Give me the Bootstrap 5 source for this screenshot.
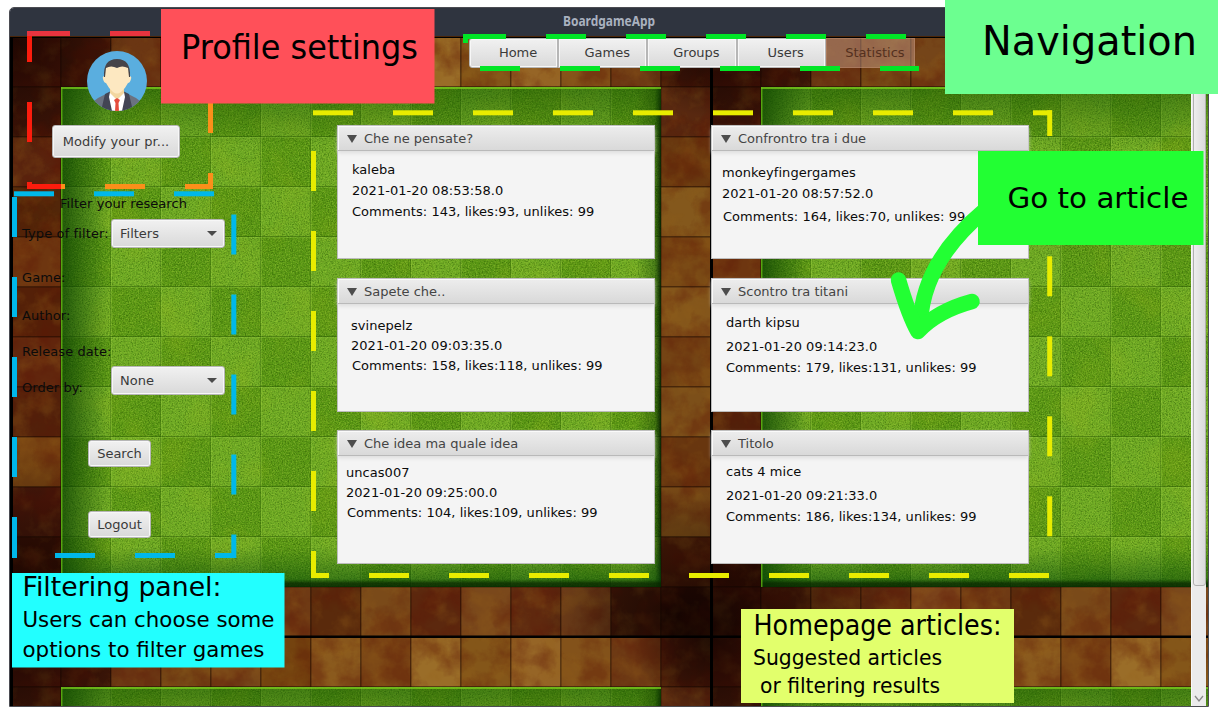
<!DOCTYPE html>
<html lang="it">
<head>
<meta charset="utf-8">
<title>BoardgameApp</title>
<link href="https://cdn.jsdelivr.net/npm/bootstrap@5.3.0/dist/css/bootstrap.min.css" rel="stylesheet">
<script src="https://cdn.jsdelivr.net/npm/bootstrap@5.3.0/dist/js/bootstrap.bundle.min.js"></script>
<style>
html,body{height:717px;overflow:hidden}
body{background:#fff;font-family:"DejaVu Sans",sans-serif;font-size:13px;line-height:16px;color:#0b0b0b}
.stage{width:1218px;height:717px;padding:7px 9px 10px 9px}
.app-window{width:1200px;height:700px;border:1px solid #4b4c52;border-radius:5px 5px 0 0;overflow:hidden}
.title-bar{height:29px;background:#2f343f;border-bottom:1px solid #4a2508;flex:none}
.title-bar svg{display:block}
.view{background:#000;min-height:0}
.board{left:0;top:0}
.fx{background:linear-gradient(#f1f1f1,#d9d9d9);border:1px solid #b6b6b6;box-shadow:inset 0 0 0 1px #f7f7f7;color:#3a3a3a;border-radius:3px;font-size:13px;line-height:16px;padding:0;--bs-btn-hover-color:#333}
.side-panel{width:301px;padding-left:12px;flex:none}
.avatar{margin:14px 0 0 65px;display:block}
.modify{width:128px;height:33px;margin:14px 0 0 30px;letter-spacing:.07px}
.filter-title{margin:38px 0 0 38px;letter-spacing:.05px}
.filter-line{height:29px}
.filter-line .cap{width:89px;white-space:nowrap;letter-spacing:.06px}
.line-type{margin-top:7px}
.line-type .cap{letter-spacing:.12px}
.line-game{margin-top:15px}
.line-author{margin-top:9px}
.line-release{margin-top:7px}
.line-order{height:29px}
.line-order .cap{margin-bottom:-1px}
.combo{width:114px;height:29px;padding:0 7px 0 8px}
.small-btn{width:63px;height:27px;margin-left:66px}
.search{margin-top:45px}
.logout{margin-top:44px}
.pages{margin-left:158px;margin-top:1px;width:446px;height:30px}
.pages .fx{width:89.2px;border-radius:0;padding:0 0 1px 9px}
.pages .fx:first-child{border-radius:3px 0 0 3px}
.pages .ghost{background:rgba(215,180,165,.4);border-color:rgba(200,150,120,.4);box-shadow:none;color:#54301e}
.articles{display:grid;grid-template-columns:318px 318px;column-gap:56px;row-gap:18px;margin:57px 0 0 26px}
.articles .pane:nth-child(-n+2){margin-bottom:1px}
.pane{height:134px;background:#f4f4f4;border:1px solid #bcbcbc;border-radius:0}
.pane-head{height:25px;background:linear-gradient(#ededed,#d9d9d9);border-bottom:1px solid #b9b9b9;box-shadow:inset 1px 1px 0 #fafafa,0 2px 4px #dcdcdc;color:#444;padding:2px 0 0 9px;gap:7px}
.pane p{margin:0;line-height:16px;white-space:nowrap;letter-spacing:.04px}
.p1{padding:11px 0 0 14px;gap:5px}
.p2{padding:14px 0 0 10px;gap:5px}
.p3{padding:14px 0 0 13px;gap:4px}
.p4{padding:11px 0 0 14px;gap:5px}
.p5{padding:9px 0 0 8px;gap:4px}
.p6{padding:8px 0 0 14px;gap:5px}
.p2 p+p+p{padding-top:2px}
.p4 p:first-child,.p6 p:first-child{margin-bottom:3px}
.p2 p+p+p,.p3 p+p+p,.p5 p+p+p{padding-left:1px}
.scroller{width:15px;margin-right:2px;background:#ebebeb;border-left:1px solid #f8f8f8;flex:none}
.thumb{height:549px;width:13px;margin-left:1px;border:1px solid #b0b0b0;border-radius:0 0 3px 3px;background:linear-gradient(90deg,#ededed,#dadada)}
.overlay{left:0;top:0;pointer-events:none}
</style>
</head>
<body>
<div class="stage position-relative">
 <main class="app-window d-flex flex-column">
  <header class="title-bar">
   <svg width="1198" height="28"><text x="553" y="18" textLength="92" lengthAdjust="spacingAndGlyphs" font-family="Noto Sans, sans-serif" font-weight="700" font-size="13.5" fill="#a9b1bf">BoardgameApp</text></svg>
  </header>
  <div class="view position-relative d-flex flex-grow-1">
   <svg class="board position-absolute" width="1198" height="670" viewBox="10 37 1198 670">
    <defs>
     <filter id="grain" x="0" y="0" width="100%" height="100%" color-interpolation-filters="sRGB"><feTurbulence type="fractalNoise" baseFrequency=".7" numOctaves="3" seed="4"/><feColorMatrix values="0 0 0 0 .13  0 0 0 0 .3  0 0 0 0 0  3 0 0 0 -1.3"/></filter>
     <filter id="glint" x="0" y="0" width="100%" height="100%" color-interpolation-filters="sRGB"><feTurbulence type="fractalNoise" baseFrequency=".7" numOctaves="3" seed="9"/><feColorMatrix values="0 0 0 0 .65  0 0 0 0 .82  0 0 0 0 .25  0 3 0 0 -1.3"/></filter>
     <filter id="patch" x="0" y="0" width="100%" height="100%" color-interpolation-filters="sRGB"><feTurbulence type="fractalNoise" baseFrequency=".02" numOctaves="3" seed="6"/><feColorMatrix values="0 0 0 0 .7  0 0 0 0 .75  0 0 0 0 .1  0 3 0 0 -1.4"/></filter>
     <filter id="stain" x="0" y="0" width="100%" height="100%" color-interpolation-filters="sRGB"><feTurbulence type="fractalNoise" baseFrequency=".035" numOctaves="5" seed="12"/><feColorMatrix values="0 0 0 0 .36  0 0 0 0 .08  0 0 0 0 .02  3 0 0 0 -1.2"/></filter>
     <filter id="rust" x="0" y="0" width="100%" height="100%" color-interpolation-filters="sRGB"><feTurbulence type="fractalNoise" baseFrequency=".045" numOctaves="5" seed="31"/><feColorMatrix values="0 0 0 0 .58  0 0 0 0 .38  0 0 0 0 .1  0 3 0 0 -1.3"/></filter>
     <linearGradient id="inL"><stop offset="0" stop-color="#063d00" stop-opacity=".75"/><stop offset="1" stop-color="#063d00" stop-opacity="0"/></linearGradient>
     <linearGradient id="inR"><stop offset="0" stop-color="#042d00" stop-opacity="0"/><stop offset=".75" stop-color="#042d00" stop-opacity=".35"/><stop offset="1" stop-color="#021800" stop-opacity=".9"/></linearGradient>
     <linearGradient id="inT" x2="0" y2="1"><stop offset="0" stop-color="#124d00" stop-opacity=".5"/><stop offset="1" stop-color="#124d00" stop-opacity="0"/></linearGradient>
     <linearGradient id="inB" x2="0" y2="1"><stop offset="0" stop-color="#064a08" stop-opacity="0"/><stop offset=".8" stop-color="#064a08" stop-opacity=".5"/><stop offset=".9" stop-color="#052800" stop-opacity=".85"/><stop offset="1" stop-color="#052800" stop-opacity=".9"/></linearGradient>
     <radialGradient id="corner"><stop offset="0" stop-color="#080100" stop-opacity=".7"/><stop offset="1" stop-color="#080100" stop-opacity="0"/></radialGradient>
     <g id="tile"></g>
    </defs>
    <use href="#tile" x="11" y="37"/><use href="#tile" x="711" y="37"/><use href="#tile" x="11" y="637"/><use href="#tile" x="711" y="637"/>
   </svg>

   <aside class="side-panel position-relative d-flex flex-column align-items-start">
    <svg class="avatar" width="60" height="60" viewBox="0 0 60 60">
     <clipPath id="disc"><circle cx="30" cy="30" r="30"/></clipPath>
     <g clip-path="url(#disc)">
      <path fill="#5aaedf" d="M0 0h60v60H0z"/>
      <path fill="#6b7280" d="M4 60V53Q10 46 22 42H38Q50 46 56 53V60z"/>
      <path fill="#434554" d="M18 43 24 40 30 50 36 40 42 43 46 60H14z"/>
      <path fill="#fff" d="M23 41 30 46 37 41 38 46 35 60H25L22 46z"/>
      <path fill="#f2d6a0" d="M23 37H37V42L30 49 23 42z"/>
      <path fill="#e64c3c" d="M27 49 30 47 33 49 31.500 52 32 60H28L28.500 52z"/>
      <path fill="#fde8c1" d="M18 17Q18 12 30 12T42 17V25Q45 25 44 28 43 32 41 32 38 38 34 41 30 44 26 41 22 38 19 32 17 32 16 28 15 25 18 25z"/>
      <path fill="#464449" d="M17 26Q16 8 30 8T43 26H42L41 17Q35 14 30 17 24 14 19 17L18 26z"/>
     </g>
    </svg>
    <button class="btn fx modify">Modify your pr...</button>
    <div class="filter-title">Filter your research</div>
    <div class="filter-line line-type d-flex align-items-center"><span class="cap">Type of filter:</span>
     <button class="btn fx combo d-flex align-items-center justify-content-between"><span>Filters</span><svg width="10" height="5"><path d="M0 0h10L5 5z" fill="#4a4a4a"/></svg></button></div>
    <div class="filter-line line-game d-flex align-items-center"><span class="cap">Game:</span></div>
    <div class="filter-line line-author d-flex align-items-center"><span class="cap">Author:</span></div>
    <div class="filter-line line-release d-flex align-items-center"><span class="cap">Release date:</span></div>
    <div class="filter-line line-order d-flex align-items-end"><span class="cap">Order by:</span>
     <button class="btn fx combo d-flex align-items-center justify-content-between"><span>None</span><svg width="10" height="5"><path d="M0 0h10L5 5z" fill="#4a4a4a"/></svg></button></div>
    <button class="btn fx small-btn search">Search</button>
    <button class="btn fx small-btn logout">Logout</button>
   </aside>

   <section class="position-relative flex-grow-1">
    <nav class="pages d-flex">
     <button class="btn fx">Home</button><button class="btn fx">Games</button><button class="btn fx">Groups</button><button class="btn fx">Users</button><button class="btn fx ghost">Statistics</button>
    </nav>
    <div class="articles">
     <article class="pane"><div class="pane-head d-flex align-items-center"><svg width="10" height="8"><path d="M0 0h10L5 8z" fill="#4d4d4d"/></svg>Che ne pensate?</div>
      <div class="p1 d-flex flex-column"><p>kaleba</p><p>2021-01-20 08:53:58.0</p><p>Comments: 143, likes:93, unlikes: 99</p></div></article>
     <article class="pane"><div class="pane-head d-flex align-items-center"><svg width="10" height="8"><path d="M0 0h10L5 8z" fill="#4d4d4d"/></svg>Confrontro tra i due</div>
      <div class="p2 d-flex flex-column"><p>monkeyfingergames</p><p>2021-01-20 08:57:52.0</p><p>Comments: 164, likes:70, unlikes: 99</p></div></article>
     <article class="pane"><div class="pane-head d-flex align-items-center"><svg width="10" height="8"><path d="M0 0h10L5 8z" fill="#4d4d4d"/></svg>Sapete che..</div>
      <div class="p3 d-flex flex-column"><p>svinepelz</p><p>2021-01-20 09:03:35.0</p><p>Comments: 158, likes:118, unlikes: 99</p></div></article>
     <article class="pane"><div class="pane-head d-flex align-items-center"><svg width="10" height="8"><path d="M0 0h10L5 8z" fill="#4d4d4d"/></svg>Scontro tra titani</div>
      <div class="p4 d-flex flex-column"><p>darth kipsu</p><p>2021-01-20 09:14:23.0</p><p>Comments: 179, likes:131, unlikes: 99</p></div></article>
     <article class="pane"><div class="pane-head d-flex align-items-center"><svg width="10" height="8"><path d="M0 0h10L5 8z" fill="#4d4d4d"/></svg>Che idea ma quale idea</div>
      <div class="p5 d-flex flex-column"><p>uncas007</p><p>2021-01-20 09:25:00.0</p><p>Comments: 104, likes:109, unlikes: 99</p></div></article>
     <article class="pane"><div class="pane-head d-flex align-items-center"><svg width="10" height="8"><path d="M0 0h10L5 8z" fill="#4d4d4d"/></svg>Titolo</div>
      <div class="p6 d-flex flex-column"><p>cats 4 mice</p><p>2021-01-20 09:21:33.0</p><p>Comments: 186, likes:134, unlikes: 99</p></div></article>
    </div>
   </section>

   <div class="scroller position-relative d-flex flex-column justify-content-between">
    <div class="thumb"></div>
    <svg width="14" height="14"><path d="M3 4 7 9 11 4" fill="none" stroke="#888" stroke-width="1.300"/></svg>
   </div>
  </div>
 </main>

 <svg class="overlay position-absolute" width="1218" height="717" font-family="DejaVu Sans, sans-serif">
  <g id="dashes"></g>
  <g fill="none" stroke="#22ff33" stroke-width="15.500" stroke-linecap="round" stroke-linejoin="round">
   <path d="M985 210Q923 262 920.500 322"/><path d="M898.500 280Q909 316 918 331.500 937 311 972 301.500"/>
  </g>
  <rect x="161" y="9" width="273.500" height="94.500" fill="#ff5059"/>
  <rect x="945" y="0" width="273" height="94" fill="#6cff90"/>
  <rect x="978" y="151" width="225.500" height="94" fill="#22ff33"/>
  <rect x="12" y="573" width="272.500" height="94.500" fill="#22ffff"/>
  <rect x="741" y="609" width="273" height="94" fill="#e2ff6c"/>
  <g fill="#000" id="notes"></g>
 </svg>
</div>
<script>
const rect = (x, y, w, h, f, extra = '') => `<rect x="${x}" y="${y}" width="${w}" height="${h}" fill="${f}" ${extra}/>`;

// one 700x600 board: ring of earth tiles around a 12x10 lawn
const top_ = '#4a1508 #3e1608 #6b3613 #774a17 #754519 #74430f #8a5a1e #7b4716 #9a6d28 #845619 #966526 #83521a #6e3a14 #421608'.split(' ');
const bottom = '#3a1006 #4a1a08 #64300f #5f2b0f #7a421a #6f3a14 #5a2a0c #7a4a19 #5c280e #7a481b #602c10 #74401a #401808 #2e0c04'.split(' ');
const left = '#3f1508 #5a240e #522609 #6e3610 #542008 #62280e #52200a #774312 #48180a #381004'.split(' ');
const right = '#582810 #6a3a10 #84581c #7a4a15 #84561b #744414 #7c4f19 #68360f #7c4c17 #4c1c08'.split(' ');
let t = rect(0, 0, 700, 600, '#000');
const earth = (x, y, c) => { t += rect(x, y, 50, 50, c); };
top_.forEach((c, i) => earth(i * 50, 0, c));
bottom.forEach((c, i) => earth(i * 50, 550, c));
left.forEach((c, i) => earth(0, 50 + i * 50, c));
right.forEach((c, i) => earth(650, 50 + i * 50, c));
t += rect(0, 0, 700, 600, '#000', 'filter="url(#rust)" opacity=".3"') + rect(0, 0, 700, 600, '#000', 'filter="url(#stain)" opacity=".38"');
for (let i = 1; i < 14; i++) t += rect(i * 50 - 1, 0, 1.5, 600, '#1a0800', 'opacity=".5"');
for (let j = 1; j < 12; j++) t += rect(0, j * 50 - 1, 700, 1.5, '#1a0800', 'opacity=".5"');
let shade = '';
[[0, 0, 120], [700, 0, 80], [0, 600, 190], [680, 590, 150]].forEach(([x, y, r]) => { shade += `<circle cx="${x}" cy="${y}" r="${r}" fill="url(#corner)"/>`; });
t += `<svg x="0" y="0" width="700" height="600">${shade}</svg>`;
t += rect(0, 0, 2, 600, '#000') + rect(699, 0, 1.5, 600, '#000') + rect(0, 0, 700, 1, '#000') + rect(0, 598.5, 700, 2, '#000');
for (let j = 0; j < 10; j++) for (let i = 0; i < 12; i++) {
  const x = 50 + i * 50, y = 50 + j * 50, light = (i + j) % 2 === 0;
  t += rect(x, y, 50, 50, light ? '#6fab24' : '#599714');
}
t += rect(50, 50, 600, 500, '#000', 'filter="url(#grain)" opacity=".4"') + rect(50, 50, 600, 500, '#000', 'filter="url(#glint)" opacity=".4"') + rect(50, 50, 600, 500, '#000', 'filter="url(#patch)" opacity=".16"');
for (let i = 1; i < 13; i++) t += rect(i * 50, 50, 1, 500, '#a4d84c', 'opacity=".3"') + rect(i * 50 + 49, 50, 1, 500, '#1d4a00', 'opacity=".25"');
for (let j = 1; j < 11; j++) t += rect(50, j * 50, 600, 1, '#a4d84c', 'opacity=".25"') + rect(50, j * 50 + 49, 600, 1, '#1d4a00', 'opacity=".4"');
t += rect(50, 50, 48, 500, 'url(#inL)') + rect(625, 50, 25, 500, 'url(#inR)') + rect(50, 50, 600, 60, 'url(#inT)') + rect(50, 510, 600, 40, 'url(#inB)') + rect(50, 50, 600, 2, '#7fd11d', 'opacity=".7"') + rect(50, 50, 1.5, 500, '#6cc414', 'opacity=".7"');
document.getElementById('tile').innerHTML = t;

// dashed frames, as runs [from, to] along each side
let d = '';
const hor = (y, c, runs, h = 5) => runs.forEach(([a, b]) => d += rect(a, y, b - a, h, c));
const ver = (x, c, runs, w = 5) => runs.forEach(([a, b]) => d += rect(x, a, w, b - a, c));
const every = (a, n, end) => Array.from({length: n}, (_, i) => [a + i * 80, Math.min(a + i * 80 + 40, end || 9999)]);
hor(31, '#e8343f', [[27, 70], [110, 150]]);
ver(27, '#fb1c0d', [[36, 62], [102, 142], [182, 189]]);
hor(184, '#fb1c0d', [[27, 61]]); hor(184, '#fb8f1a', [[61, 65], [105, 145], [185, 213]]);
ver(208, '#fb8f1a', [[100, 133], [173, 189]]);
const blue = '#00b8ea', yellow = '#e8ec00', green = '#00e626';
hor(191.3, blue, every(14, 3)); ver(12, blue, [...every(197, 4), [517, 558]]);
ver(231.3, blue, [...every(214.5, 4), [534.5, 558]]); hor(553, blue, [[55, 95], [135, 175], [215, 236]]);
hor(110.3, yellow, every(313, 10, 1052)); ver(311, yellow, [...every(151, 5), [551, 578]]);
ver(1047.200, yellow, [[110.3, 136], ...every(256.3, 4)]); hor(573, yellow, [[311, 329], ...every(369, 9)]);
hor(34, green, [[463, 506], ...every(546, 5)]); ver(463, green, [[34, 43]]); hor(66, green, every(480, 6, 919));
document.getElementById('dashes').innerHTML = d;

// callout captions: text, x, baseline, font size, drawn width
document.getElementById('notes').innerHTML = [
  ['Profile settings', 181, 58.5, 33, 237], ['Navigation', 982, 54.500, 40, 215], ['Go to article', 1007.5, 207.5, 28.5, 181],
  ['Filtering panel:', 22.5, 596, 27, 199], ['Users can choose some', 22.5, 627, 21.5, 252], ['options to filter games', 22.5, 657, 21.5, 242],
  ['Homepage articles:', 753.5, 635, 27.5, 248], ['Suggested articles', 753, 665, 22, 189], ['or filtering results', 760, 693, 22, 180]
].map(([s, x, y, f, w]) => `<text x="${x}" y="${y}" font-size="${f}" textLength="${w}" lengthAdjust="spacingAndGlyphs">${s}</text>`).join('');
</script>
</body>
</html>
